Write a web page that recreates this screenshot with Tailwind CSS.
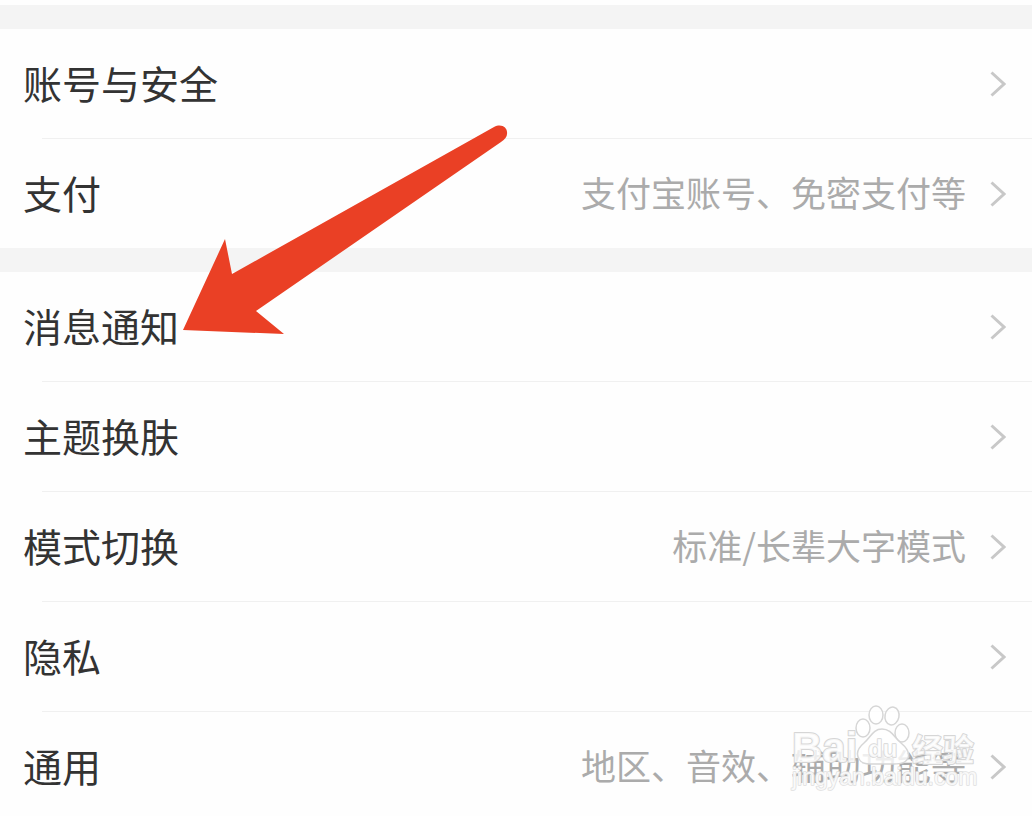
<!DOCTYPE html>
<html lang="zh-CN">
<head>
    <meta charset="UTF-8">
    <meta name="viewport" content="width=device-width, initial-scale=1.0">
    <title>设置</title>
    <script src="https://cdn.jsdelivr.net/npm/@tailwindcss/browser@4"></script>
</head>
<body class="bg-[#f4f4f4] font-['Noto_Sans_CJK_SC',sans-serif] text-[#333]">
    <svg class="hidden">
        <symbol id="chevron" viewBox="0 0 16 26">
            <path d="M1.5 1.5 14 13 1.5 24.5" fill="none" stroke="#c8c8c8" stroke-width="3" />
        </symbol>
    </svg>

    <main class="relative min-h-screen border-t-5 border-[#fefefe] pt-6">
        <!-- Account -->
        <ul class="mb-6 bg-[#fefefe]">
            <li>
                <a href="#account" class="flex h-[109px] items-center pr-[26px] pl-[23px]">
                    <span class="flex-1 pb-0.5 text-[39px]">账号与安全</span>
                    <svg class="h-[26px] w-4"><use href="#chevron" /></svg>
                </a>
                <hr class="ml-[42px] border-[#f0f0f0]">
            </li>
            <li>
                <a href="#pay" class="flex h-[109px] items-center pr-[26px] pl-[23px]">
                    <span class="flex-1 pb-0.5 text-[39px]">支付</span>
                    <span class="mr-6 pb-0.5 text-[35px] text-[#ababab]">支付宝账号、免密支付等</span>
                    <svg class="h-[26px] w-4"><use href="#chevron" /></svg>
                </a>
            </li>
        </ul>

        <!-- Preferences -->
        <ul class="bg-[#fefefe]">
            <li>
                <a href="#notice" class="flex h-[109px] items-center pr-[26px] pl-[23px]">
                    <span class="flex-1 pb-0.5 text-[39px]">消息通知</span>
                    <svg class="h-[26px] w-4"><use href="#chevron" /></svg>
                </a>
                <hr class="ml-[42px] border-[#f0f0f0]">
            </li>
            <li>
                <a href="#theme" class="flex h-[109px] items-center pr-[26px] pl-[23px]">
                    <span class="flex-1 pb-0.5 text-[39px]">主题换肤</span>
                    <svg class="h-[26px] w-4"><use href="#chevron" /></svg>
                </a>
                <hr class="ml-[42px] border-[#f0f0f0]">
            </li>
            <li>
                <a href="#mode" class="flex h-[109px] items-center pr-[26px] pl-[23px]">
                    <span class="flex-1 pb-0.5 text-[39px]">模式切换</span>
                    <span class="mr-6 pb-0.5 text-[35px] text-[#ababab]">标准/长辈大字模式</span>
                    <svg class="h-[26px] w-4"><use href="#chevron" /></svg>
                </a>
                <hr class="ml-[42px] border-[#f0f0f0]">
            </li>
            <li>
                <a href="#privacy" class="flex h-[109px] items-center pr-[26px] pl-[23px]">
                    <span class="flex-1 pb-0.5 text-[39px]">隐私</span>
                    <svg class="h-[26px] w-4"><use href="#chevron" /></svg>
                </a>
                <hr class="ml-[42px] border-[#f0f0f0]">
            </li>
            <li class="relative">
                <a href="#general" class="flex h-[109px] items-center pr-[26px] pl-[23px]">
                    <span class="flex-1 pb-0.5 text-[39px]">通用</span>
                    <span class="mr-6 pb-0.5 text-[35px] text-[#ababab]">地区、音效、辅助功能等</span>
                    <svg class="h-[26px] w-4"><use href="#chevron" /></svg>
                </a>

                <!-- Watermark -->
                <svg class="pointer-events-none absolute -top-2 right-[52px] h-[96px] w-[192px] font-['Liberation_Sans','Noto_Sans_CJK_SC',sans-serif]" viewBox="0 0 192 96" fill="#fff" stroke="#d6d6d6" stroke-width="2" stroke-linejoin="round" paint-order="stroke">
                    <g fill-opacity="0.8">
                        <text x="4" y="58" font-size="42" font-weight="700">Bai</text>
                        <text x="124" y="57" font-size="31" font-weight="700">经验</text>
                        <g stroke-width="1.5" paint-order="normal">
                            <ellipse cx="75" cy="24" rx="7" ry="9" />
                            <ellipse cx="88" cy="11" rx="7" ry="9" />
                            <ellipse cx="104" cy="12" rx="7" ry="9" transform="rotate(12 104 12)" />
                            <ellipse cx="114" cy="29" rx="7" ry="9" />
                            <path d="M94 25C85 25 83 33 76 39C70 44 68 50 71 55C74 61 81 60 95 60C109 60 117 61 120 54C122 49 119 44 113 39C106 33 103 25 94 25Z" />
                        </g>
                        <text x="80" y="53" font-size="24" font-weight="700" stroke-width="1.5">du</text>
                    </g>
                    <text x="4" y="81" font-size="23" stroke="#e0e0e0" stroke-width="1.5" fill-opacity="0.8">jingyan.baidu.com</text>
                </svg>
            </li>
        </ul>

        <!-- Pointer to 消息通知 -->
        <svg class="pointer-events-none absolute top-[115px] left-[180px] h-[220px] w-[330px]" viewBox="0 0 330 220" fill="#ea4025">
            <path d="M3 210 45 119 52 154 314 7C322 3 328 8 327 14Q327 18 321 22L76 191 104 214Z" />
        </svg>
    </main>
</body>
</html>
